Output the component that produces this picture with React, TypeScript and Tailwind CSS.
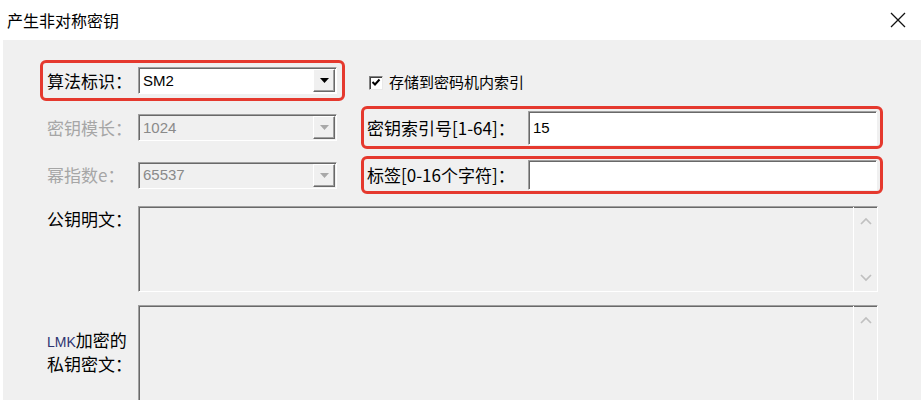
import React from "react";

const cjk = { fontFamily: '"Noto Sans CJK SC", "Noto Sans", sans-serif' };
const latin = { fontFamily: '"Liberation Sans", Arial, sans-serif' };

function Arrow({ disabled }: { disabled?: boolean }) {
  return (
    <div className="flex h-full w-[22px] items-center justify-center border-t border-l border-b border-r border-t-white border-l-white border-b-[#696969] border-r-[#696969] bg-[#f0f0f0] shadow-[inset_-1px_-1px_0_#a0a0a0]">
      <svg width="9" height="5" viewBox="0 0 9 5">
        <path d="M0 0 H9 L4.5 5 Z" fill={disabled ? "#a8a8a8" : "#000"} />
      </svg>
    </div>
  );
}

function Combo({ value, disabled }: { value: string; disabled?: boolean }) {
  return (
    <div
      className={`flex h-[27px] w-[199px] items-stretch border border-t-[#a0a0a0] border-l-[#a0a0a0] border-b-white border-r-white shadow-[inset_1px_1px_0_#696969] ${
        disabled ? "bg-[#f0f0f0]" : "bg-white"
      }`}
    >
      <div
        className={`flex flex-1 items-center pl-[4px] pt-[1px] text-[15px] ${disabled ? "text-[#8a8a8a]" : "text-black"}`}
        style={latin}
      >
        {value}
      </div>
      <div className="py-[1px] pr-[1px]">
        <Arrow disabled={disabled} />
      </div>
    </div>
  );
}

function Sunken({ className, children }: { className: string; children?: React.ReactNode }) {
  return (
    <div
      className={`border border-t-[#a0a0a0] border-l-[#a0a0a0] border-b-white border-r-white shadow-[inset_1px_1px_0_#696969] ${className}`}
    >
      {children}
    </div>
  );
}

function Chevron({ up }: { up?: boolean }) {
  return (
    <svg width="12" height="8" viewBox="0 0 12 8">
      <path
        d={up ? "M1 7 L6 2 L11 7" : "M1 1 L6 6 L11 1"}
        fill="none"
        stroke="#c0c0c0"
        strokeWidth="1.7"
      />
    </svg>
  );
}

function TextArea({ height, showDown }: { height: number; showDown?: boolean }) {
  return (
    <Sunken className="flex w-[740px] bg-[#f0f0f0]">
      <div className="flex w-full" style={{ height }}>
        <div className="flex-1" />
        <div className="flex w-[24px] flex-col items-center justify-between border-l border-l-white pt-[10px] pb-[9px]">
          <Chevron up />
          {showDown ? <Chevron /> : <span />}
        </div>
      </div>
    </Sunken>
  );
}

export default function App() {
  return (
    <div className="h-[400px] w-[921px] overflow-hidden bg-white" style={cjk}>
      {/* title bar */}
      <div className="flex h-[40px] items-center justify-between pl-[7px] pr-[15px]">
        <span className="text-[16px] text-black">产生非对称密钥</span>
        <svg width="16" height="16" viewBox="0 0 16 16">
          <path d="M1 1 L15 15 M15 1 L1 15" stroke="#111" strokeWidth="1.3" />
        </svg>
      </div>

      {/* body */}
      <div className="ml-[3px] h-[360px] bg-[#f0f0f0] pl-[37px] pt-[20px]">
        {/* row 1 */}
        <div className="flex h-[41px] items-stretch gap-[16px]">
          <div className="flex w-[305px] items-center rounded-[6px] border-[3px] border-[#e5392e] pl-[4px]">
            <span className="w-[91px] text-[17px] text-black">算法标识：</span>
            <Combo value="SM2" />
          </div>
          <div className="flex items-center pl-[8px] pt-[4px]">
            <div className="flex h-[14px] w-[14px] items-center justify-center border border-t-[#808080] border-l-[#808080] border-b-[#e8e8e8] border-r-[#e8e8e8] bg-white shadow-[inset_1px_1px_0_#404040]">
              <svg width="10" height="9" viewBox="0 0 10 9">
                <path d="M1.5 4 L4 6.5 L8.5 1.5" fill="none" stroke="#000" strokeWidth="2" />
              </svg>
            </div>
            <span className="ml-[6px] text-[15px] text-black">存储到密码机内索引</span>
          </div>
        </div>

        {/* row 2 */}
        <div className="mt-[5px] flex h-[43px] items-stretch gap-[16px]">
          <div className="flex w-[305px] items-center border-[3px] border-transparent pl-[4px]">
            <span className="w-[91px] text-[17px] text-[#a6a6a6]">密钥模长：</span>
            <Combo value="1024" disabled />
          </div>
          <div className="flex w-[522px] items-center rounded-[6px] border-[3px] border-[#e5392e] pl-[3px] pr-[3px]">
            <span className="w-[161px] text-[17px] text-black">密钥索引号[1-64]：</span>
            <Sunken className="flex h-[34px] flex-1 items-center bg-white pl-[4px] pt-[1px]">
              <span className="text-[15px] text-black" style={latin}>
                15
              </span>
            </Sunken>
          </div>
        </div>

        {/* row 3 */}
        <div className="mt-[7px] flex h-[38px] items-stretch gap-[16px]">
          <div className="flex w-[305px] items-center border-[3px] border-transparent pl-[4px]">
            <span className="w-[91px] text-[17px] text-[#a6a6a6]">幂指数e：</span>
            <Combo value="65537" disabled />
          </div>
          <div className="flex w-[522px] items-center rounded-[6px] border-[3px] border-[#e5392e] pl-[3px] pr-[3px]">
            <span className="w-[161px] text-[17px] text-black">标签[0-16个字符]：</span>
            <Sunken className="h-[30px] flex-1 bg-white" />
          </div>
        </div>

        {/* public key */}
        <div className="mt-[12px] flex pl-[7px]">
          <span className="w-[91px] pt-[1px] text-[17px] leading-[24px] text-black">公钥明文：</span>
          <TextArea height={84} showDown />
        </div>

        {/* private key */}
        <div className="mt-[13px] flex pl-[7px]">
          <div className="w-[91px] pt-[24px] text-[17px] leading-[22px] text-black">
            <div>
              <span className="text-[14px] text-[#2e3470]" style={latin}>
                LMK
              </span>
              加密的
            </div>
            <div>私钥密文：</div>
          </div>
          <TextArea height={110} />
        </div>
      </div>
    </div>
  );
}
